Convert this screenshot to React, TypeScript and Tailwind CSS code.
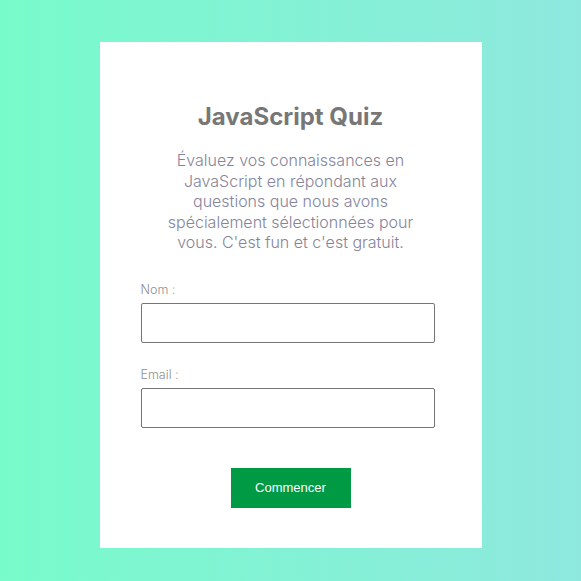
export default function App() {
  return (
    <div className="w-[581px] h-[581px] bg-[linear-gradient(to_right,#78fbcb,#8ee8de)] flex items-start justify-center pt-[42px]" style={{ fontFamily: "Inter, 'Noto Sans', sans-serif" }}>
      <div className="w-[382px] h-[506px] bg-white px-[41px] pt-[60px] flex flex-col">
        <h1 className="text-center text-[24px] leading-[29px] font-bold text-[#777777]">JavaScript Quiz</h1>
        <p className="mt-[19px] mx-auto w-[260px] text-center text-[16px] leading-[20.5px] font-light text-[#85859a]">
          Évaluez vos connaissances en JavaScript en répondant aux questions que nous avons spécialement sélectionnées pour vous. C'est fun et c'est gratuit.
        </p>
        <label className="mt-[29px] text-[12.5px] leading-[16px] font-light text-[#8f8f8f]">Nom :</label>
        <input className="mt-[5px] h-[40px] w-[294px] border border-[#767676] rounded-[2px] outline-none" />
        <label className="mt-[24px] text-[12.5px] leading-[16px] font-light text-[#8f8f8f]">Email :</label>
        <input className="mt-[5px] h-[40px] w-[294px] border border-[#767676] rounded-[2px] outline-none" />
        <button className="mt-[40px] mx-auto w-[120px] h-[40px] bg-[#009a44] text-white text-[13px]" style={{ fontFamily: "'Liberation Sans', Arial, sans-serif" }}>
          Commencer
        </button>
      </div>
    </div>
  );
}
